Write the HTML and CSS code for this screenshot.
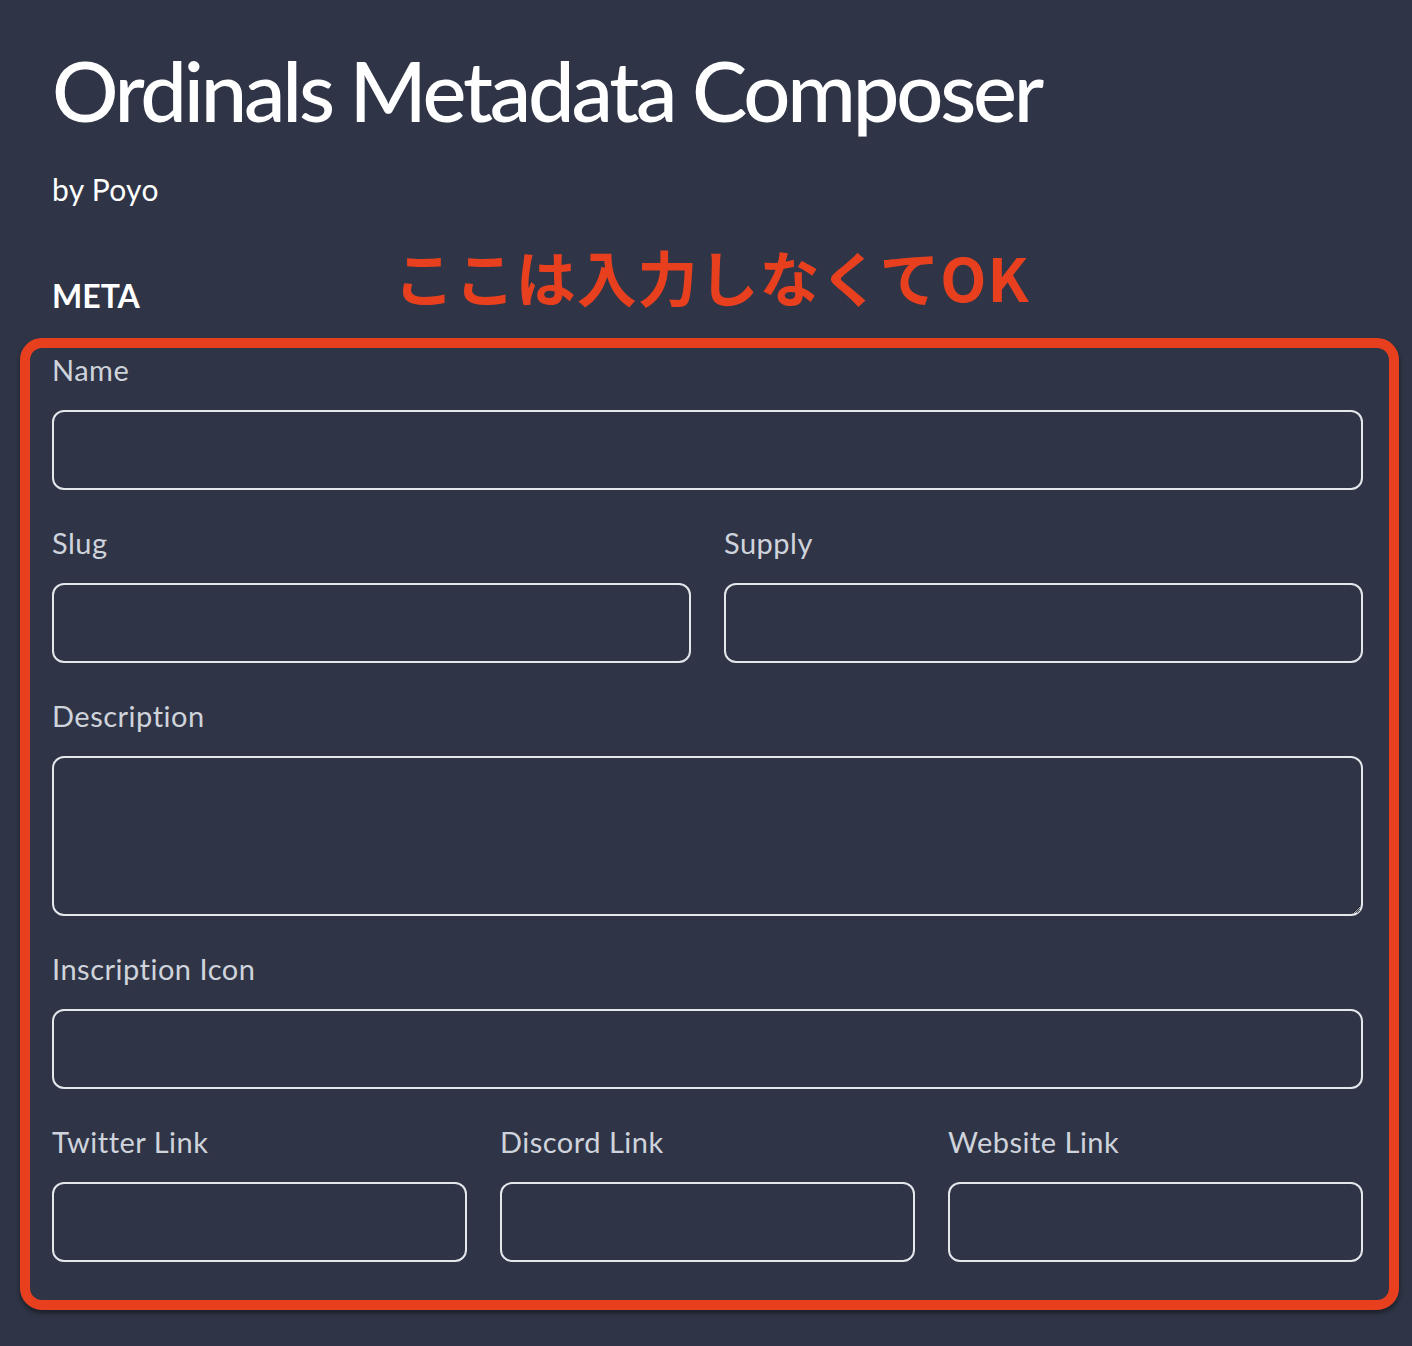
FILE: index.html
```html
<!DOCTYPE html>
<html lang="ja">
<head>
<meta charset="utf-8">
<title>Ordinals Metadata Composer</title>
<link rel="stylesheet" href="styles.css">
</head>
<body>
<div class="page">
  <h1 class="title">Ordinals Metadata Composer</h1>
  <p class="byline">by Poyo</p>
  <h2 class="section">META</h2>
  <form class="form">
    <div class="field">
      <label class="label">Name</label>
      <input class="input" type="text">
    </div>
    <div class="row row-2">
      <div class="field">
        <label class="label">Slug</label>
        <input class="input" type="text">
      </div>
      <div class="field">
        <label class="label">Supply</label>
        <input class="input" type="text">
      </div>
    </div>
    <div class="field">
      <label class="label">Description</label>
      <textarea class="input textarea"></textarea>
    </div>
    <div class="field">
      <label class="label">Inscription Icon</label>
      <input class="input" type="text">
    </div>
    <div class="row row-3">
      <div class="field">
        <label class="label">Twitter Link</label>
        <input class="input" type="text">
      </div>
      <div class="field">
        <label class="label">Discord Link</label>
        <input class="input" type="text">
      </div>
      <div class="field">
        <label class="label">Website Link</label>
        <input class="input" type="text">
      </div>
    </div>
  </form>
  <div class="note">ここは入力しなくてOK</div>
  <div class="highlight"></div>
</div>
</body>
</html>
```
FILE: styles.css
```css
html, body {
  margin: 0;
  padding: 0;
  background: #2f3546;
}
body {
  font-family: Lato, "Noto Sans", "Noto Sans CJK JP", sans-serif;
  color: #ffffff;
  min-height: 1346px;
}
.page {
  position: relative;
  padding: 40px 49px 60px 52px;
}
.title {
  margin: 0;
  font-size: 83px;
  line-height: 100px;
  font-weight: 500;
  letter-spacing: -3.2px;
  color: #ffffff;
}
.byline {
  margin: 29px 0 0;
  font-size: 30px;
  line-height: 40px;
  letter-spacing: 0.3px;
  color: #ffffff;
}
.section {
  margin: 67px 0 0;
  font-size: 32px;
  line-height: 40px;
  font-weight: 700;
  color: #ffffff;
}
.form {
  margin-top: 36px;
  display: flex;
  flex-direction: column;
  gap: 35px;
}
.field {
  display: flex;
  flex-direction: column;
}
.label {
  font-size: 29px;
  line-height: 36px;
  letter-spacing: 0.5px;
  color: #cfd3dc;
  margin-bottom: 22px;
}
.input {
  box-sizing: border-box;
  width: 100%;
  height: 80px;
  margin: 0;
  background: transparent;
  border: 2px solid #e4e7ec;
  border-radius: 12px;
  color: #ffffff;
  font-family: inherit;
  font-size: 28px;
  padding: 0 16px;
}
.textarea {
  height: 160px;
  resize: vertical;
  padding: 12px 16px;
  display: block;
}
.row {
  display: grid;
  column-gap: 33px;
}
.row-2 {
  grid-template-columns: 1fr 1fr;
}
.row-3 {
  grid-template-columns: 1fr 1fr 1fr;
}
.note {
  position: absolute;
  left: 394px;
  top: 246px;
  font-family: "Noto Sans CJK JP", sans-serif;
  font-weight: 700;
  font-size: 60px;
  line-height: 1;
  letter-spacing: 0.9px;
  color: #e8401f;
  white-space: nowrap;
}
.highlight {
  position: absolute;
  left: 20px;
  top: 338px;
  width: 1379px;
  height: 972px;
  box-sizing: border-box;
  border: 10px solid #e8401f;
  border-radius: 22px;
  box-shadow: 0 3px 5px rgba(0, 0, 0, 0.45);
  pointer-events: none;
}
```
